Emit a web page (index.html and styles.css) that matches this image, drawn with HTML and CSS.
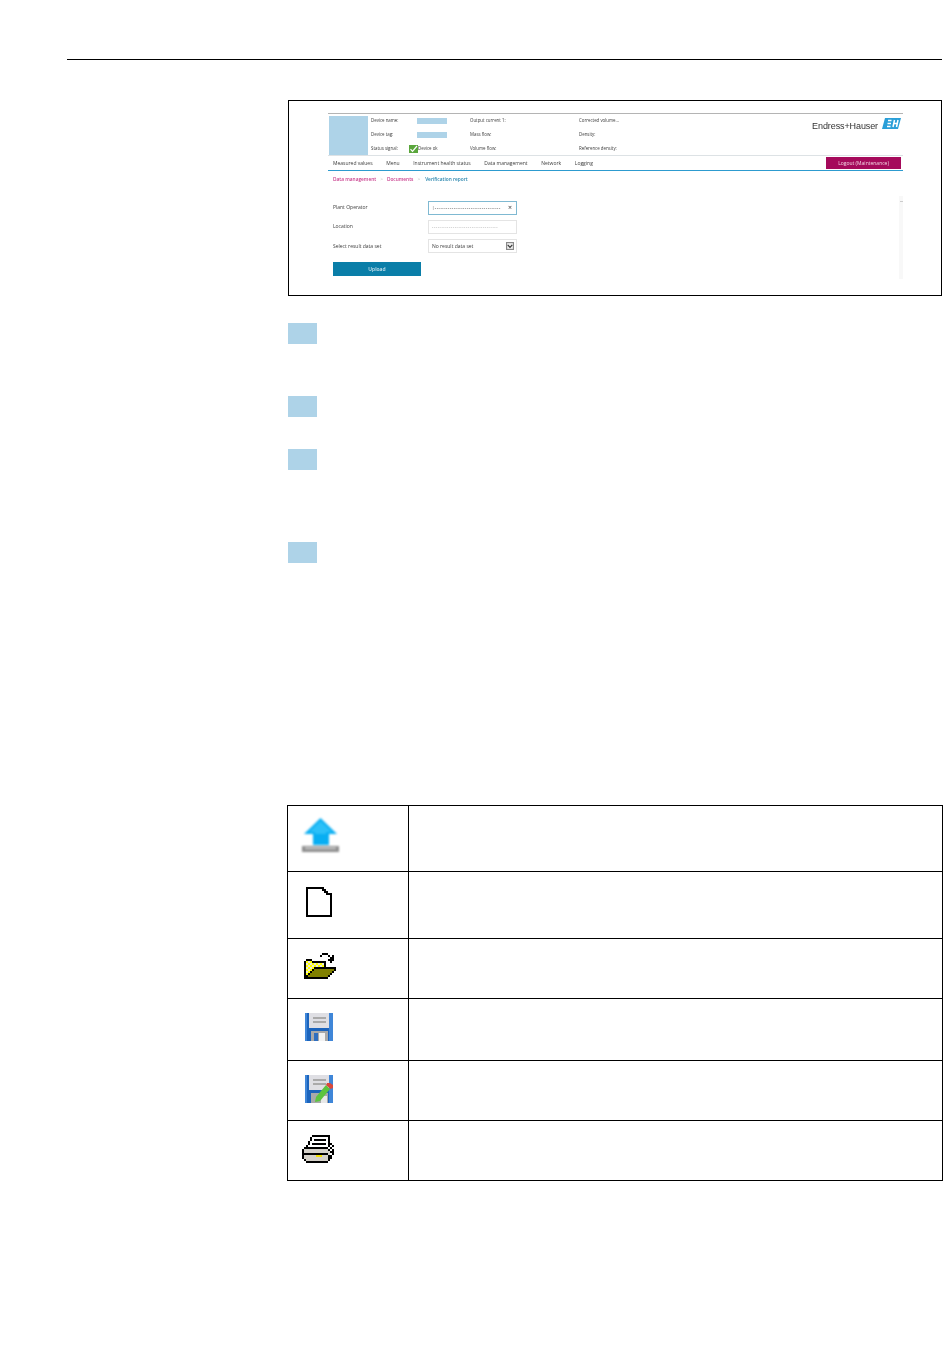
FILE: index.html
```html
<!DOCTYPE html>
<html lang="en">
<head>
    <meta charset="UTF-8">
    <meta name="viewport" content="width=device-width, initial-scale=1.0">
    <title>Verification report</title>
    <link rel="stylesheet" href="styles.css">
</head>
<body>
    <div class="top-rule"></div>

    <div class="figure">
        <div class="shot">
            <div class="shot-head">
                <div class="device-pic"></div>
                <div class="device-info">
                    <span>Device name:</span><span class="mask"></span><span>Output current 1:</span><span>Corrected volume...</span>
                    <span>Device tag:</span><span class="mask"></span><span>Mass flow:</span><span>Density:</span>
                    <span>Status signal:</span>
                    <span class="status">
                        <svg class="check" viewBox="0 0 9 8">
                            <rect width="9" height="8" fill="#5aa63c"/>
                            <path d="M1.500 4.200 3.500 6.300 8 1" fill="none" stroke="#fff" stroke-width="1.200"/>
                        </svg>
                        Device ok
                    </span>
                    <span>Volume flow:</span><span>Reference density:</span>
                </div>
                <div class="logo">
                    <span class="logo-text">Endress+Hauser</span>
                    <svg class="eh" viewBox="0 0 19 11">
                        <path d="M3 0H19L16 11H0Z" fill="#2a9fd8"/>
                        <path d="M6 2.500H9.500M5.500 5.500H9M5 8.500H8.500M12.500 2 11 9M16 2 14.500 9M12 5.500H15.500" stroke="#fff" stroke-width="1.500" fill="none"/>
                    </svg>
                </div>
            </div>

            <div class="shot-nav">
                <span>Measured values</span>
                <span>Menu</span>
                <span>Instrument health status</span>
                <span>Data management</span>
                <span>Network</span>
                <span>Logging</span>
                <span class="logout">Logout (Maintenance)</span>
            </div>

            <div class="crumbs">
                <span class="crumb">Data management</span><span class="sep">&gt;</span>
                <span class="crumb">Documents</span><span class="sep">&gt;</span>
                <span class="crumb-now">Verification report</span>
            </div>

            <div class="shot-body">
                <div class="form">
                    <div class="form-row">
                        <span>Plant Operator</span>
                        <div class="field active"><span class="dashes">|-----------------------------------</span><span class="clear">×</span></div>
                    </div>
                    <div class="form-row">
                        <span>Location</span>
                        <div class="field"><span class="dashes light">-----------------------------------</span></div>
                    </div>
                    <div class="form-row">
                        <span>Select result data set</span>
                        <div class="field">
                            <span>No result data set</span>
                            <svg class="drop" viewBox="0 0 7 7">
                                <rect x=".5" y=".5" width="6" height="6" fill="#eee" stroke="#888"/>
                                <path d="M1.500 2.500 3.500 4.800 5.500 2.500" fill="none" stroke="#333"/>
                            </svg>
                        </div>
                    </div>
                    <div class="upload">Upload</div>
                </div>
                <div class="scroll"><span class="scroll-up"></span></div>
            </div>
        </div>
    </div>

    <div class="steps">
        <div class="step step-1"></div>
        <div class="step step-2"></div>
        <div class="step step-3"></div>
        <div class="step step-4"></div>
    </div>

    <table class="icons">
        <tr class="r1">
            <td class="ic">
                <svg class="i-upload" width="40" height="38" viewBox="0 0 40 38">
                    <path d="M19.500 2 36 18H28V29H12V18H3Z" fill="#08aef2"/>
                    <path d="M19.500 5 31 16H25V18H14V16H8Z" fill="#2cc0f8"/>
                    <rect x="1" y="30" width="37" height="6" fill="#8c8c8c"/>
                    <rect x="4" y="31.500" width="31" height="1.500" fill="#d8d8d8"/>
                </svg>
            </td>
            <td></td>
        </tr>
        <tr class="r2">
            <td class="ic">
                <svg class="i-doc" width="26" height="30" viewBox="0 0 26 30" shape-rendering="crispEdges">
                    <path d="M0 0H18V2H20V4H22V6H26V30H0ZM2 2V28H24V8H20V6H18V4H16V2Z" fill="#000" fill-rule="evenodd"/>
                </svg>
            </td>
            <td></td>
        </tr>
        <tr class="r3">
            <td class="ic">
                <svg class="i-folder" width="32" height="26" viewBox="0 0 32 26" shape-rendering="crispEdges">
                    <defs>
                        <pattern id="dither" width="4" height="4" patternUnits="userSpaceOnUse">
                            <rect width="4" height="4" fill="#ffff00"/>
                            <rect width="2" height="2" fill="#e8e8d8"/>
                            <rect x="2" y="2" width="2" height="2" fill="#e8e8d8"/>
                        </pattern>
                    </defs>
                    <path d="M2 8H8V10H20V14H10V16H8V18H6V20H4V22H2Z" fill="url(#dither)"/>
                    <path d="M10 16H30V18H28V20H26V22H24V24H4V22H6V20H8V18H10Z" fill="#808000"/>
                    <path d="M0 8H2V24H0ZM2 6H8V8H2ZM8 8H22V10H8ZM20 10H22V14H20ZM10 14H32V16H10ZM30 16H32V18H30ZM28 18H30V20H28ZM26 20H28V22H26ZM24 22H26V24H24ZM22 24H24V26H22ZM0 24H22V26H0ZM8 16H10V18H8ZM6 18H8V20H6ZM4 20H6V22H4ZM2 22H4V24H2Z" fill="#000"/>
                    <path d="M16 2H18V4H16ZM18 0H24V2H18ZM24 2H26V4H24ZM26 4H28V6H26ZM28 2H30V8H28ZM24 6H30V8H24ZM26 8H28V10H26Z" fill="#000"/>
                </svg>
            </td>
            <td></td>
        </tr>
        <tr class="r4">
            <td class="ic">
                <svg class="i-disk" width="28" height="28" viewBox="0 0 28 28">
                    <rect width="28" height="28" fill="#1c64bc"/>
                    <rect width="2" height="28" fill="#3f86d8"/>
                    <rect x="24" width="4" height="28" fill="#3f86d8"/>
                    <rect x="4" width="20" height="15" fill="#dfdfe4"/>
                    <rect x="8" y="4" width="13" height="2" fill="#aaa"/>
                    <rect x="8" y="8" width="13" height="2" fill="#aaa"/>
                    <rect x="6" y="18" width="17" height="10" fill="#a9a9a9"/>
                    <rect x="9" y="20" width="4" height="8" fill="#2f6fc0"/>
                    <rect x="14" y="20" width="6" height="8" fill="#f2f2f2"/>
                </svg>
            </td>
            <td></td>
        </tr>
        <tr class="r5">
            <td class="ic">
                <svg class="i-disk" width="28" height="28" viewBox="0 0 28 28">
                    <rect width="28" height="28" fill="#1c64bc"/>
                    <rect width="2" height="28" fill="#3f86d8"/>
                    <rect x="24" width="4" height="28" fill="#3f86d8"/>
                    <rect x="4" width="20" height="15" fill="#dfdfe4"/>
                    <rect x="8" y="4" width="13" height="2" fill="#aaa"/>
                    <rect x="8" y="8" width="13" height="2" fill="#aaa"/>
                    <rect x="6" y="18" width="17" height="10" fill="#a9a9a9"/>
                    <rect x="16" y="21" width="6" height="7" fill="#e8e8e8"/>
                    <path d="M21 10 25 14 15 26 10 27 11 22Z" fill="#5cc43f"/>
                    <path d="M22 8 25 8 28 10V13L25.500 14 21 10Z" fill="#d9483b"/>
                </svg>
            </td>
            <td></td>
        </tr>
        <tr class="r6">
            <td class="ic">
                <svg class="i-printer" width="32" height="28" viewBox="0 0 32 28" shape-rendering="crispEdges">
                    <path d="M10 2H26V12H6V10H8V6H10Z" fill="#fff"/>
                    <path d="M2 14H28V26H2Z" fill="#d4d0c8"/>
                    <path d="M14 20H20V22H14Z" fill="#f2e000"/>
                    <path d="M10 0H28V2H10ZM8 2H10V6H8ZM6 6H8V10H6ZM26 2H28V10H26ZM12 4H24V6H12ZM10 8H24V10H10Z" fill="#000"/>
                    <path d="M4 10H6V12H4ZM2 12H26V14H2ZM0 14H2V24H0ZM2 24H4V26H2ZM4 26H26V28H4ZM2 18H26V20H2ZM26 24H28V26H26Z" fill="#000"/>
                    <path d="M28 8H30V10H28ZM26 10H28V12H26ZM30 10H32V12H30ZM28 12H30V14H28ZM26 14H28V16H26ZM30 14H32V20H30ZM28 16H30V18H28ZM28 20H30V24H28ZM26 20H28V24H26Z" fill="#000"/>
                </svg>
            </td>
            <td></td>
        </tr>
    </table>
</body>
</html>
```

FILE: styles.css
```css
body {
    margin: 0;
    padding-top: 59px;
    background-color: #fff;
    font-family: "Liberation Sans", Arial, sans-serif;
    color: #000;
}

.top-rule {
    margin-left: 67px;
    width: 875px;
    height: 1px;
    background-color: #000;
}

/* Embedded screenshot */
.figure {
    box-sizing: border-box;
    margin: 40px 0 0 288px;
    width: 654px;
    height: 196px;
    border: 1px solid #000;
    padding: 12px 38px 0 39px;
}

.shot {
    font-family: "Open Sans", sans-serif;
    font-size: 5px;
    line-height: 7px;
    color: #3c3c3c;
    filter: blur(0.25px);
}

.shot-head {
    display: flex;
    height: 43px;
    border-top: 1px solid #b4b4b4;
    border-bottom: 1px solid #dde2e5;
    box-sizing: border-box;
    padding-top: 2px;
    padding-left: 1px;
}

.device-pic {
    width: 39px;
    height: 39px;
    background-color: #aed3e8;
}

.device-info {
    display: grid;
    grid-template-columns: 46px 53px 109px 100px;
    grid-auto-rows: 14px;
    align-items: center;
    margin-left: 3px;
    margin-top: -2.500px;
    white-space: nowrap;
    font-size: 4.400px;
}

.mask {
    width: 30px;
    height: 6px;
    background-color: #aed3e8;
}

.status {
    display: flex;
    align-items: center;
    margin-left: -8px;
}

.check {
    width: 9px;
    height: 8px;
}

.logo {
    margin-left: auto;
    margin-right: 2px;
    display: flex;
    align-items: flex-start;
    gap: 4px;
    font-family: "Liberation Sans", sans-serif;
    font-size: 9px;
    letter-spacing: -0.100px;
    line-height: 14px;
    color: #333;
    margin-top: 2px;
}

.logo-text {
    padding-top: 1px;
}

.eh {
    width: 19px;
    height: 11px;
}

.shot-nav {
    display: flex;
    align-items: center;
    gap: 13.600px;
    height: 15px;
    padding-left: 5px;
    border-bottom: 1px solid #2d9bcf;
    box-sizing: border-box;
}

.logout {
    margin-left: auto;
    margin-right: 2px;
    width: 75px;
    height: 12px;
    line-height: 12px;
    text-align: center;
    background-color: #a50a5b;
    color: #f3d6e4;
}

.crumbs {
    display: flex;
    align-items: center;
    height: 17px;
    padding-left: 5px;
    font-weight: 600;
    color: #c83c8c;
    font-size: 4.800px;
}

.sep {
    margin: 0 4px 0 4px;
    color: #bbb;
    font-weight: 400;
}

.crumb-now {
    color: #2a86ae;
    margin-left: 1px;
}

.shot-body {
    display: flex;
    justify-content: space-between;
    height: 100px;
}

.form {
    padding: 13px 0 0 5px;
}

.form-row {
    display: grid;
    grid-template-columns: 95px 89px;
    align-items: center;
    height: 13.500px;
    margin-bottom: 5.700px;
}

.field {
    display: flex;
    align-items: center;
    justify-content: space-between;
    box-sizing: border-box;
    height: 13.500px;
    padding: 0 2px 0 3px;
    border: 1px solid #e4e4e4;
    font-size: 5px;
}

.field.active {
    border-color: #7fb9d2;
}

.dashes {
    font-size: 4px;
    letter-spacing: 0.600px;
    overflow: hidden;
    white-space: nowrap;
}

.light {
    color: #aaa;
}

.clear {
    font-size: 7px;
    color: #333;
    margin-right: 2px;
}

.drop {
    width: 8px;
    height: 8px;
}

.upload {
    width: 88px;
    height: 14px;
    line-height: 14px;
    margin-top: 9.500px;
    text-align: center;
    font-weight: 600;
    background-color: #0a7ea8;
    color: #cfe6ef;
}

.scroll {
    position: relative;
    width: 4px;
    height: 83px;
    margin-top: 8px;
    background-color: #f8f8f8;
}

.scroll-up {
    position: absolute;
    top: 5px;
    left: 1px;
    width: 3px;
    height: 3px;
    border-top: 1px solid #ccc;
}

/* Step number placeholders */
.steps {
    margin-left: 288px;
}

.step {
    width: 29px;
    height: 21px;
    background-color: #aed3e8;
}

.step-1 { margin-top: 27px; }
.step-2 { margin-top: 52px; }
.step-3 { margin-top: 32px; }
.step-4 { margin-top: 72px; }

/* Icon table */
.icons {
    border-collapse: collapse;
    table-layout: fixed;
    width: 656px;
    margin: 242px 0 0 287px;
}

.icons td {
    border: 1px solid #000;
    padding: 0;
}

.icons .ic {
    width: 120px;
    vertical-align: top;
}

.ic svg {
    display: block;
}

.r1 { height: 66px; }
.r2 { height: 67px; }
.r3 { height: 60px; }
.r4 { height: 62px; }
.r5 { height: 60px; }
.r6 { height: 60px; }

.i-upload {
    margin: 10px 0 0 13px;
    filter: blur(0.800px);
}

.i-doc { margin: 15px 0 0 18px; }
.i-folder { margin: 14px 0 0 16px; }
.i-disk { margin: 14px 0 0 17px; filter: blur(0.300px); }
.i-printer { margin: 14px 0 0 14px; }
```
